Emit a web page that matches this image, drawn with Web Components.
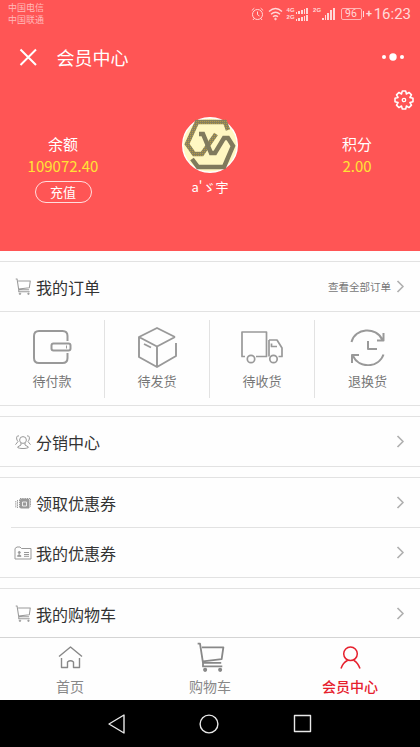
<!DOCTYPE html>
<html lang="zh-CN">
<head>
<meta charset="utf-8">
<title>会员中心</title>
<style>
html,body{margin:0;height:747px;overflow:hidden;background:#fefefe}
body{font-family:"Noto Sans CJK SC","Noto Sans",sans-serif}
</style>
</head>
<body>
<member-app></member-app>
<script>
const ICONS = {
  close: '<path d="M1.5 1.5 17 17M17 1.5 1.5 17" stroke-width="2"/>',
  cart: '<path d="M1 1.5h2.2l2.8 18h17M5 5h20l-1.6 11L6 18M6 19.5v3.3h18" stroke-width="1.7"/><circle cx="8" cy="26" r="1.3" fill="currentColor" stroke-width="1.2"/><circle cx="22" cy="26" r="1.3" fill="currentColor" stroke-width="1.2"/>',
  people: '<circle cx="8" cy="5.5" r="3.4"/><path d="M6 8.5v2L2.5 12.5c0 2 11 2 11 0L10 10.500v-2M4 1.500C1 .5 1 5 3 7L.5 10.200M12 1.500c3-1 3 3.500 1 5.500l2.500 3.200"/>',
  coupon: '<path d="M4.500 3.500v8M2.500 4v8M.8 5v7M5 2.500h10.500v8" stroke-dasharray="1.5 .7"/><path d="M5.500 3.500h8.500v8.500H5.500z" fill="currentColor"/><path d="M7.500 6h4v4h-4z" stroke="#fff" stroke-width=".8"/>',
  card: '<path d="M1 13V2.500L3 1h3l1.500 1.500H17V13H1zM10 6.500h5M10 8.500h5M10 10.300h5"/><circle cx="5.300" cy="6.500" r="1" fill="currentColor"/><path d="M3.500 10.300c.5-2 3-2 3.500 0z" fill="currentColor"/>',
  wallet: '<path d="M34.500 11V6q0-5-5-5H6Q1 1 1 6v22q0 5 5 5h23.500q5 0 5-5v-5" stroke-width="2"/><rect x="18.500" y="13.500" width="19" height="7" rx="2" stroke-width="2"/><path d="M33.500 15.500v3" stroke-width="1"/>',
  box: '<path d="M37 10 19 1 1 10v20l18 10 19-11V16M1 10l18 9.500L37 10M19 19.500V40M6 17l7 3.500" stroke-width="1.900"/>',
  truck: '<path d="M4 25.500H1V1h24.500v24.500H15M28 9h8l5 8v8.500h-3.500M28 25.500V9M30.500 12.500v3h5.500" stroke-width="1.700"/><circle cx="10" cy="28" r="3.700" stroke-width="1.700"/><circle cx="32.500" cy="28" r="3.700" stroke-width="1.700"/>',
  refresh: '<path d="M1.500 13C5-1 26-3 32.500 11M33.500 4v7.500H27M33.500 25.500C29 39 9 40 3 27M2 34v-8h7M18 12v8h9" stroke-width="2"/>',
  home: '<path d="M1 10.500 12.500 1 24 10.500M3.500 12v9.500h6V16q3-2.500 6 0v5.500h6V12" stroke-width="1.400"/>',
  user: '<circle cx="10.500" cy="7.800" r="6.800" stroke-width="1.500"/><path d="M1 22.500q2-6 6.500-8M14 14.500q4 2.500 6 8" stroke-width="1.500"/>',
  chevron: '<path d="M1.500 1 7 6.500 1.500 12" stroke-width="1.700"/>',
  gear: '<path d="M8.300 1h3.400l.7 3 2.600-1.600 2.500 2.500-1.600 2.600 3.100.8v3.400l-3.100.8 1.600 2.600-2.500 2.500-2.600-1.600-.7 3H8.300l-.8-3L5 17.600l-2.500-2.500 1.600-2.600-3.100-.8V8.300l3.100-.8-1.600-2.600L5 2.400 7.500 4z" stroke-width="1.500"/><circle cx="10" cy="10" r="1.700" stroke-width="1.300"/>',
  alarm: '<circle cx="6.500" cy="7.500" r="5"/><path d="M6.500 4.500v3.200l2 1.300M.8 3.500 3.300 1.200M12.200 3.500 9.700 1.200M3 11.500 2 13M10 11.500l1 1.500"/>',
  wifi: '<path d="M1 4.500q6.500-6 13 0M3 7.200q4.500-4 9 0M5 9.800q2.500-2 5 0" stroke-width="1.400"/><circle cx="7.500" cy="12" r=".8" fill="currentColor"/>',
  back: '<path d="M16 1v18L1 10z" stroke-width="1.400"/>',
  circle: '<circle cx="10" cy="10" r="8.900" stroke-width="1.400"/>',
  square: '<path d="M1.500 1.500h16v16h-16z" stroke-width="1.400"/>',
  dots: '<g fill="currentColor" stroke="none"><circle cx="2" cy="4" r="2"/><circle cx="11" cy="4" r="3.700"/><circle cx="20" cy="4" r="2"/></g>'
};

function define(name, html, setup){
  const t = document.createElement('template');
  t.innerHTML = html;
  customElements.define(name, class extends HTMLElement{
    connectedCallback(){
      if(this.shadowRoot) return;
      this.attachShadow({mode:'open'}).append(t.content.cloneNode(true));
      if(setup) setup(this, this.shadowRoot);
    }
  });
}

define('ui-icon', '<style>:host{display:block;flex:none}svg{display:block;width:100%;height:100%;fill:none;stroke:currentColor;stroke-linejoin:round}</style><svg></svg>', (el, root) => {
  const w = el.getAttribute('w'), h = el.getAttribute('h');
  const svg = root.querySelector('svg');
  el.style.width = w + 'px'; el.style.height = h + 'px';
  svg.setAttribute('viewBox', '0 0 ' + (el.getAttribute('box') || w + ' ' + h));
  svg.innerHTML = ICONS[el.getAttribute('name')];
});

define('signal-bars', `<style>:host{display:flex;align-items:flex-end;gap:1px}i{width:1.700px;background:currentColor}</style>`, (el, root) => {
  const max = +el.getAttribute('max');
  for(let k = 1; k <= 5; k++){ const i = document.createElement('i'); i.style.height = max*k/5 + 'px'; root.append(i); }
});

define('status-bar', `<style>
:host{display:flex;height:28px;box-sizing:border-box;color:#ffd9d9;padding:0 9px 0 8px;justify-content:space-between}
.carrier{font-size:9px;line-height:12px;padding-top:2px;color:#ffb9b9}
.right{display:flex;align-items:center;height:28px}
.g{font:bold 6px/7px "Liberation Sans",sans-serif;margin-right:1px}
.stack{display:grid;gap:1px}
.bat{box-sizing:border-box;width:21px;height:12px;border:1px solid #ffb5b5;border-radius:2px;font:10.500px/10px Roboto,sans-serif;text-align:center}
.cap{width:1.500px;height:6px;background:currentColor;margin-left:1px}
.plus{font:bold 11px/12px Roboto,sans-serif;margin:0 4px 0 2px}
.time{font:15px/18px Roboto,sans-serif;width:35px;display:flex;justify-content:flex-end}
</style>
<div class="carrier">中国电信<br>中国联通</div>
<div class="right">
<ui-icon name="alarm" w="13" h="14"></ui-icon>
<ui-icon name="wifi" w="15" h="14" style="margin:0 4px"></ui-icon>
<div class="g">4G<br>2G</div><div class="stack"><signal-bars max="6"></signal-bars><signal-bars max="6"></signal-bars></div>
<div class="g" style="margin-left:5px;padding-bottom:7px">2G</div><signal-bars max="12"></signal-bars>
<div class="bat" style="margin-left:6px">96</div><div class="cap"></div><div class="plus">+</div><div class="time">16:23</div>
</div>`);

define('title-bar', `<style>
:host{display:flex;height:58px;align-items:center;padding:0 16px 0 19px;color:#fff}
span{font-size:18px;line-height:26px;margin-left:19px;flex:1}
</style><ui-icon name="close" w="18.500" h="18.500"></ui-icon><span><slot></slot></span><ui-icon name="dots" w="22" h="8"></ui-icon>`);

define('balance-info', `<style>
:host{display:flex;flex-direction:column;align-items:center;padding-top:47px;color:#fff;font-size:15px;line-height:22px}
b{font-weight:400;color:#ffe335}
::slotted(button){font:13px/20px "Noto Sans CJK SC",sans-serif;color:#fff;background:none;border:1.500px solid #ffdede;border-radius:12px;width:57px;height:22px;margin:4px 0 0;padding:0;box-sizing:border-box}
</style><span></span><b></b><slot></slot>`, (el, root) => {
  root.querySelector('span').textContent = el.getAttribute('label');
  root.querySelector('b').textContent = el.getAttribute('value');
});

define('user-avatar', `<style>
:host{display:flex;flex-direction:column;align-items:center;padding-top:31px;color:#fff;font-size:13px;line-height:20px}
svg{width:56px;height:56px;margin-bottom:4px}
</style><svg viewBox="0 0 56 56"><defs><pattern id="grain" width="2" height="2" patternUnits="userSpaceOnUse"><path d="M0 0h2v2H0z" fill="#87805e"/><path d="M0 0h1v1H0z" fill="#b79a45"/></pattern></defs>
<circle cx="28" cy="28" r="27.300" fill="#fff7c2" stroke="#fff" stroke-width="1.400"/>
<g fill="none" stroke-width="4.500"><path d="M46 13 43 5H15L5 27l7 10h8L34 17" stroke="url(#grain)"/><path d="M17 17h4l8 19h4l9-15h4l5 8-9 21H16l-6-8" stroke="#807a5d"/></g></svg><slot></slot>`);

define('profile-panel', `<style>
:host{display:grid;grid-template-columns:126px 168px 126px;height:165px;position:relative}
.gear{position:absolute;right:6px;top:4px;color:#fff}
</style><balance-info label="余额" value="109072.40"><button>充值</button></balance-info><user-avatar>a'ゞ宇</user-avatar><balance-info label="积分" value="2.00"></balance-info><ui-icon class="gear" name="gear" w="20" h="20"></ui-icon>`);

define('list-row', `<style>
:host{display:flex;align-items:center;height:49px;padding:0 16px 0 13px;color:#999}
.ico{width:20px;display:flex;justify-content:center;margin-right:3px}
.title{font-size:16px;line-height:24px;color:#333;flex:1}
.note{font-size:10.500px;line-height:16px;color:#777;margin-right:5px;padding-top:1px}
ui-icon{color:#b0b0b0}
.ico ui-icon{color:#999}
</style><div class="ico"></div><div class="title"><slot></slot></div><div class="note"><slot name="note"></slot></div><ui-icon name="chevron" w="8" h="13"></ui-icon>`, (el, root) => {
  const [w, h, box] = {cart:[16,17,'26 28'],people:[16,15,'16 14'],coupon:[16,14,'16 14'],card:[18,14,'18 14']}[el.getAttribute('icon')];
  root.querySelector('.ico').innerHTML = `<ui-icon name="${el.getAttribute('icon')}" w="${w}" h="${h}" box="${box}"></ui-icon>`;
});

define('list-group', `<style>:host{display:block;box-sizing:border-box;border-top:1px solid #e2e2e2;border-bottom:1px solid #e2e2e2;margin-top:10px}</style><slot></slot>`);

define('order-item', `<style>
:host{display:flex;flex-direction:column;align-items:center;font-size:13px;line-height:20px;color:#777;height:78px;box-sizing:border-box}
:host(:not(:last-child)){border-right:1px solid #e2e2e2}
.pic{height:51px;display:flex;align-items:center;justify-content:center;color:#999;padding-top:3px;box-sizing:border-box;padding-bottom:0}
</style><div class="pic"></div><slot></slot>`, (el, root) => {
  const n = el.getAttribute('icon'), [w,h] = {wallet:[39,34],box:[39,41],truck:[42,33],refresh:[35,37]}[n];
  root.querySelector('.pic').innerHTML = `<ui-icon name="${n}" w="${w}" h="${h}"></ui-icon>`;
});

define('order-grid', `<style>:host{display:grid;grid-template-columns:repeat(4,105px);border-top:1px solid #e2e2e2;padding:8px 0 7px}</style><slot></slot>`);

define('tab-item', `<style>
:host{display:flex;flex-direction:column;align-items:center;color:#888;font-size:14px;line-height:20px}
:host([active]){color:#e6202d;font-weight:500}
.pic{height:38px;display:flex;align-items:center}
</style><div class="pic"></div><slot></slot>`, (el, root) => {
  const n = el.getAttribute('icon'), [w,h,b] = {home:[25,23,'25 23'],cart:[29,30,'26 28'],user:[21,23,'21 23']}[n];
  root.querySelector('.pic').innerHTML = `<ui-icon name="${n}" w="${w}" h="${h}" box="${b}"></ui-icon>`;
});

define('tab-bar', `<style>:host{display:grid;grid-template-columns:repeat(3,1fr);height:63px;box-sizing:border-box;border-top:1px solid #d4d4d4;background:#fefefe}</style><slot></slot>`);

define('system-nav', `<style>:host{display:flex;height:47px;background:#000;color:#e8e8e8;justify-content:center;align-items:center;gap:74px}</style>
<ui-icon name="back" w="17" h="20"></ui-icon><ui-icon name="circle" w="20" h="20"></ui-icon><ui-icon name="square" w="19" h="19"></ui-icon>`);

define('member-app', `<style>
:host{display:flex;flex-direction:column;width:420px;height:747px;overflow:hidden}
header{background:#ff5555;height:251px;flex:none}
main{flex:1;min-height:0;overflow:hidden}
hr{border:0;height:1px;background:#e2e2e2;margin:0 0 0 11px}
tab-bar,system-nav{flex:none}
</style>
<header><status-bar></status-bar><title-bar>会员中心</title-bar><profile-panel></profile-panel></header>
<main>
<list-group><list-row icon="cart">我的订单<span slot="note">查看全部订单</span></list-row>
<order-grid><order-item icon="wallet">待付款</order-item><order-item icon="box">待发货</order-item><order-item icon="truck">待收货</order-item><order-item icon="refresh">退换货</order-item></order-grid></list-group>
<list-group><list-row icon="people">分销中心</list-row></list-group>
<list-group><list-row icon="coupon">领取优惠券</list-row><hr><list-row icon="card">我的优惠券</list-row></list-group>
<list-group><list-row icon="cart">我的购物车</list-row></list-group>
</main>
<tab-bar><tab-item icon="home">首页</tab-item><tab-item icon="cart">购物车</tab-item><tab-item icon="user" active>会员中心</tab-item></tab-bar>
<system-nav></system-nav>`);
</script>
</body>
</html>
